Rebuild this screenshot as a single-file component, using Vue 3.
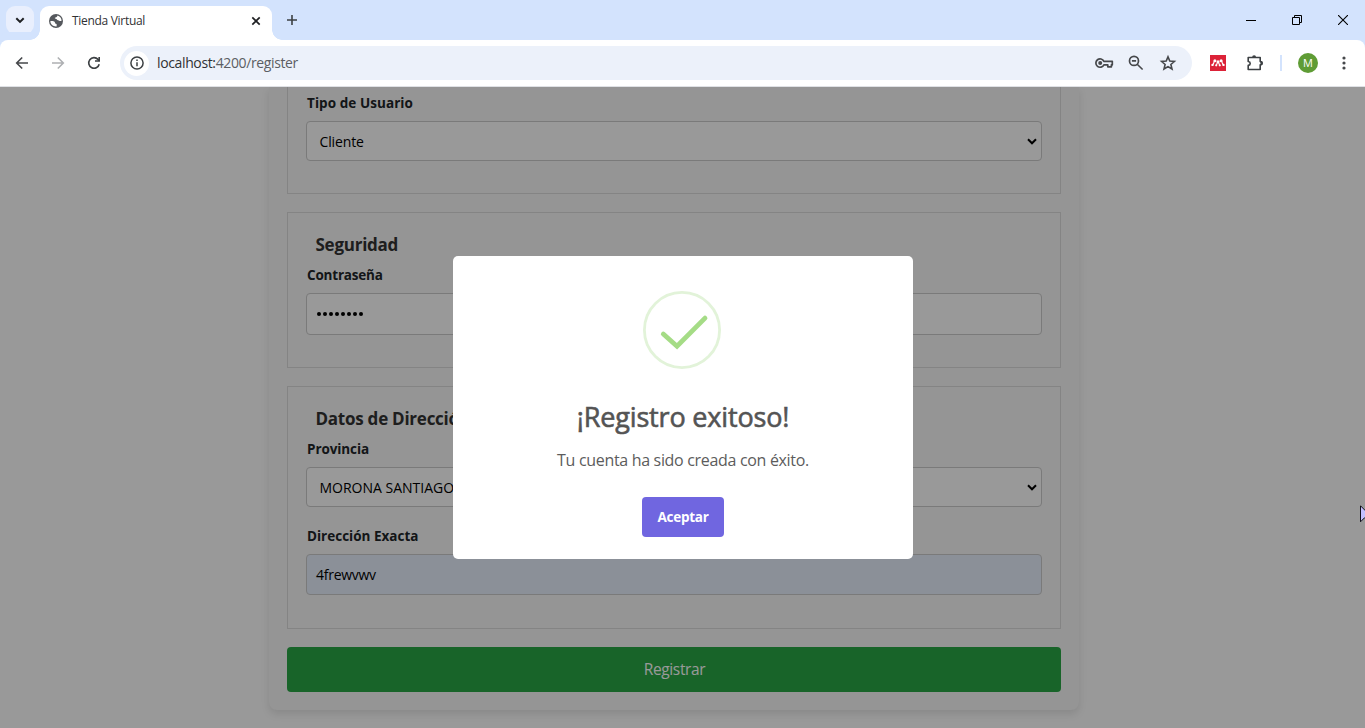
<script setup>
const dots = 8
</script>

<template>
  <div class="window">
    <header class="titlebar">
      <button class="tabsearch" aria-label="Buscar pestañas">
        <svg width="28" height="28" viewBox="0 0 28 28"><path d="M10.3 12.2 14 15.9l3.7-3.7" fill="none" stroke="#1f2023" stroke-width="2" /></svg>
      </button>
      <div class="tab">
        <svg class="globe" width="14" height="14" viewBox="0 0 14 14">
          <circle cx="7" cy="7" r="7" fill="#55585d" />
          <path d="M1.4 7.1c1.5-.2 3.7-.1 4.3.9.5.8 0 1.5 1.2 1.7 1 .2.9.9.7 2.8C4.2 12.8 1.3 10.5 1.4 7.1ZM8.5 1.600c-.2 1.300-.9 1.700-2 1.800-1 .1-.8 1.200.2 1.400 1.300.2 1.100 1.400 2.300 1.500 1.200.1 1.500.9 2.300.8.700 0 1-.3 1.300-.6C12.400 4 10.800 2.100 8.500 1.600Z" fill="#fff" />
        </svg>
        <span class="tabtitle">Tienda Virtual</span>
        <svg class="close" width="10" height="10" viewBox="0 0 10 10"><path d="m1.300 1.300 7.400 7.400m0-7.400L1.300 8.700" stroke="#1f2023" stroke-width="1.700" /></svg>
      </div>
      <svg class="plus" width="12" height="12" viewBox="0 0 12 12"><path d="M6 1v10M1 6h10" stroke="#3c4043" stroke-width="1.600" /></svg>
      <div class="controls">
        <svg width="10" height="10" viewBox="0 0 10 10"><path d="M0 5.500h10" stroke="#000" /></svg>
        <svg width="10" height="10" viewBox="0 0 10 10"><path d="M.5 2.500h7v7h-7zM2.500 2.500v-2h7v7h-2" fill="none" stroke="#000" /></svg>
        <svg width="10" height="10" viewBox="0 0 10 10"><path d="m0 0 10 10M10 0 0 10" stroke="#000" stroke-width="1.100" /></svg>
      </div>
    </header>

    <nav class="toolbar">
      <svg class="nav" width="14" height="14" viewBox="0 0 14 14"><path d="M13 7H2M7.200 1.500 1.700 7l5.500 5.500" fill="none" stroke="#46484b" stroke-width="1.600" /></svg>
      <svg class="nav" width="14" height="14" viewBox="0 0 14 14"><path d="M1 7h11M6.800 1.500 12.300 7l-5.500 5.500" fill="none" stroke="#aeb0b3" stroke-width="1.600" /></svg>
      <svg class="nav" width="14" height="14" viewBox="0 0 14 14"><path d="M12.200 8.200A5.300 5.300 0 1 1 11 3.400l1.200 1.300" fill="none" stroke="#3c4043" stroke-width="1.600" /><path d="M13 1v4.800H8V4.200h3.400V1Z" fill="#3c4043" /></svg>
      <div class="omnibox">
        <span class="info">
          <svg width="14" height="14" viewBox="0 0 14 14"><circle cx="7" cy="7" r="6.100" fill="none" stroke="#3c4043" stroke-width="1.500" /><path d="M7 6.200v4M7 3.600v1.500" stroke="#3c4043" stroke-width="1.500" /></svg>
        </span>
        <span class="url"><b>localhost:</b>4200/register</span>
        <div class="boxicons">
          <svg width="20" height="20" viewBox="0 0 20 20"><path d="M9.900 8.300H18.300v3.500h-.9v2h-3.600v-2H9.900A4.200 4.200 0 1 1 9.900 8.300Z" fill="none" stroke="#46484b" stroke-width="1.700" stroke-linejoin="round" /><circle cx="6.200" cy="10.100" r="2" fill="#46484b" /></svg>
          <svg width="20" height="20" viewBox="0 0 20 20"><circle cx="8" cy="7.900" r="4.500" fill="none" stroke="#46484b" stroke-width="1.700" /><path d="m11.200 11.200 5.400 5.300M5.900 7.900h4.200" stroke="#46484b" stroke-width="1.600" /></svg>
          <svg width="20" height="20" viewBox="0 0 20 20"><path d="m10 3.900 1.800 4.200 4.600.4-3.500 3 1.100 4.500-4-2.400L6 16l1.100-4.500-3.500-3 4.600-.4Z" fill="none" stroke="#46484b" stroke-width="1.600" /></svg>
        </div>
      </div>
      <div class="extensions">
        <svg class="mendeley" width="16" height="16" viewBox="0 0 16 16"><path fill="#dc2238" d="M0 0h16v16H0z" /><g fill="#fff"><circle cx="8" cy="6.800" r="1.500" /><circle cx="4.900" cy="5.700" r="1.500" /><circle cx="11.100" cy="5.700" r="1.500" /><circle cx="2.500" cy="9.900" r="1.200" /><circle cx="6.200" cy="10.300" r="1.100" /><circle cx="9.800" cy="10.300" r="1.100" /><circle cx="13.500" cy="9.900" r="1.200" /></g><path d="M2.900 9.500c1.200-1 .8-2.500 1.700-3.800M13.100 9.500c-1.200-1-.8-2.500-1.700-3.800M6.400 10c.6-1 .4-2 1.600-2.700 1.200.7 1 1.700 1.600 2.700" fill="none" stroke="#fff" stroke-width="1.100" /></svg>
        <svg class="puzzle" width="18" height="18" viewBox="0 0 18 18"><path d="M2.200 3.500h12v4.100c1.300 0 1.900.6 1.900 1.600s-.6 1.600-1.900 1.600v4.700h-12v-4.100c1.400-.2 2-.9 2-2s-.6-1.700-2-1.900Z" fill="none" stroke="#3c4043" stroke-width="1.600" stroke-linejoin="round" /><path d="M6.100 3.500a2 2.300 0 0 1 4 0ZM14.500 7.300a2.300 1.900 0 0 1 0 3.800Z" fill="#3c4043" /></svg>
        <i class="divider"></i>
        <span class="avatar">M</span>
        <svg class="menu" width="4" height="14" viewBox="0 0 4 14" fill="#46484b"><circle cx="2" cy="2" r="1.600" /><circle cx="2" cy="7" r="1.600" /><circle cx="2" cy="12" r="1.600" /></svg>
      </div>
    </nav>

    <main class="page">
      <form class="card" @submit.prevent>
        <section class="group first">
          <div class="label"><span class="t-tipo">Tipo de Usuario</span></div>
          <div class="field select"><span class="t-cliente">Cliente</span>
            <svg width="10" height="7" viewBox="0 0 10 7"><path d="m1 1.300 4 4 4-4" fill="none" stroke="#000" stroke-width="2" /></svg>
          </div>
        </section>
        <section class="group">
          <h2><span>Seguridad</span></h2>
          <div class="label"><span class="t-con">Contraseña</span></div>
          <div class="field password"><i v-for="n in dots" :key="n"></i></div>
        </section>
        <section class="group last">
          <h2><span>Datos de Dirección</span></h2>
          <div class="label"><span class="t-prov">Provincia</span></div>
          <div class="field select"><span>MORONA SANTIAGO</span>
            <svg width="10" height="7" viewBox="0 0 10 7"><path d="m1 1.300 4 4 4-4" fill="none" stroke="#000" stroke-width="2" /></svg>
          </div>
          <div class="label second"><span>Dirección Exacta</span></div>
          <div class="field filled"><span class="t-val">4frewvwv</span></div>
        </section>
        <button class="submit"><span>Registrar</span></button>
      </form>

      <div class="overlay">
        <div class="dialog">
          <svg class="check" width="78" height="78" viewBox="0 0 78 78"><circle cx="39" cy="39" r="37.600" fill="none" stroke="#e2f3d9" stroke-width="2.800" /><path d="m20.300 43 13.700 12.300L62 27.100" fill="none" stroke="#a5dc86" stroke-width="4.800" stroke-linecap="round" /></svg>
          <h1>¡Registro exitoso!</h1>
          <p>Tu cuenta ha sido creada con éxito.</p>
          <button class="accept"><span>Aceptar</span></button>
        </div>
      </div>

      <svg class="cursor" width="12" height="19" viewBox="0 0 12 19"><path d="M.5.800v16l4-4 7-1Z" fill="#c3c0ff" stroke="#101018" /></svg>
    </main>
  </div>
</template>

<style>
body { overflow: hidden; }
</style>

<style scoped>
* { box-sizing: border-box; }
svg { display: block; flex: none; }
span { white-space: nowrap; }
.window { width: 1365px; height: 728px; overflow: hidden; display: flex; flex-direction: column; font-family: "Open Sans", "Noto Sans", sans-serif; background: #fff; }
button { border: 0; padding: 0; font-family: inherit; }

.titlebar { height: 40px; flex: none; background: #d3e3fd; display: flex; padding-left: 6px; }
.tabsearch { width: 28px; height: 28px; margin-top: 6px; border-radius: 9px; background: #e9effd; }
.tab { position: relative; width: 232px; height: 34px; margin: 6px 0 0 6px; background: #fff; border-radius: 9px 9px 0 0; display: flex; align-items: center; padding: 0 11px 5px 9px; }
.tab::before, .tab::after { content: ""; position: absolute; bottom: 0; width: 10px; height: 10px; }
.tab::before { left: -10px; background: radial-gradient(circle at 0 0, transparent 9.500px, #fff 10px); }
.tab::after { right: -10px; background: radial-gradient(circle at 100% 0, transparent 9.500px, #fff 10px); }
.tabtitle { margin-left: 9px; font-size: 12px; color: #303134; letter-spacing: -0.300px; }
.close { margin-left: auto; }
.plus { margin: 14px 0 0 14px; }
.controls { margin: 15px 17px 0 auto; display: flex; gap: 36px; }

.toolbar { height: 47px; flex: none; background: #fff; border-bottom: 1px solid #dfe1e5; display: flex; align-items: center; padding-left: 15px; border-radius: 8px 8px 0 0; box-shadow: 0 -8px 0 #d3e3fd; }
.nav { margin-right: 22px; }
.omnibox { width: 1072px; height: 34px; margin-left: -3px; background: #ecf1fa; border-radius: 17px; display: flex; align-items: center; padding-left: 4px; }
.info { width: 25px; height: 25px; border-radius: 50%; background: #fff; display: grid; place-items: center; }
.url { margin: -1px 0 0 8px; font-size: 14px; color: #5b5e63; letter-spacing: -0.370px; }
.url b { font-weight: 400; color: #303134; }
.boxicons { margin: 0 14px 0 auto; display: flex; gap: 12px; }
.extensions { flex: 1; display: flex; align-items: center; }
.mendeley { margin-left: 18px; }
.puzzle { margin-left: 20px; }
.divider { width: 2px; height: 16px; margin-left: 16px; background: #d3e3fd; }
.avatar { width: 20px; height: 20px; margin-left: 16px; border-radius: 50%; background: #5f9c35; color: #fff; font-size: 11px; line-height: 20px; text-align: center; }
.menu { margin-left: 24px; }

.page { position: relative; flex: 1; overflow: hidden; background: #fff; }
.card { width: 810px; height: 623px; margin-left: 269px; padding: 0 18px 18px; background: #f8f8f8; border-radius: 0 0 8px 8px; box-shadow: 0 4px 9px rgba(0, 0, 0, 0.110); }
.group { border: 1px solid #ddd; margin-bottom: 18px; padding: 0 18px; height: 156px; }
.group.first { border-top: 0; height: 107px; padding-top: 6px; }
.group.last { height: 243px; }
h2 { margin: 0; height: 52px; padding: 20px 0 0 9.500px; font-size: 17px; line-height: 24px; font-weight: 700; color: #333; letter-spacing: -0.250px; }
.label { height: 20px; font-size: 13.500px; line-height: 20px; font-weight: 700; color: #212529; padding-left: 1px; }
.label.second { margin-top: 19px; }
.t-tipo { letter-spacing: 0.070px; }
.t-con { letter-spacing: -0.200px; }
.t-prov { letter-spacing: -0.100px; }
.field { height: 42px; margin-top: 8px; border: 1px solid #ccc; border-radius: 4px; background: #fff; display: flex; align-items: center; color: #000; font-size: 14px; padding-left: 10px; }
.select { height: 40px; padding: 0 4px 0 12.500px; justify-content: space-between; }
.t-cliente { letter-spacing: -0.120px; }
.t-val { margin-left: -1px; letter-spacing: -0.270px; }
.password { gap: 2px; }
.password i { width: 4px; height: 4px; border-radius: 50%; background: #000; }
.filled { height: 41px; background: #e8f0fe; }
.submit { display: block; width: 100%; height: 45px; border-radius: 4px; background: #28a745; color: #fff; font-size: 15.500px; letter-spacing: -0.350px; padding: 0 0 1px 1px; }

.overlay { position: absolute; inset: 0; background: rgba(0, 0, 0, 0.400); }
.dialog { width: 460px; height: 303px; margin: 169px 0 0 453px; border-radius: 5px; background: #fff; display: flex; flex-direction: column; align-items: center; padding-top: 35px; }
.check { margin-right: 2px; }
h1 { margin: 26px 0 0; height: 44px; line-height: 44px; font-size: 27px; font-weight: 400; color: #545454; letter-spacing: -0.170px; -webkit-text-stroke: 0.600px #545454; }
p { margin: 9px 0 0; height: 24px; line-height: 24px; font-size: 16px; color: #5c5c5c; letter-spacing: -0.320px; }
.accept { width: 82px; height: 40px; margin-top: 25px; border-radius: 4px; background: #7066e0; color: #fff; font-size: 13.500px; font-weight: 700; letter-spacing: -0.250px; }
.cursor { position: absolute; left: 1360px; top: 418px; }
</style>
